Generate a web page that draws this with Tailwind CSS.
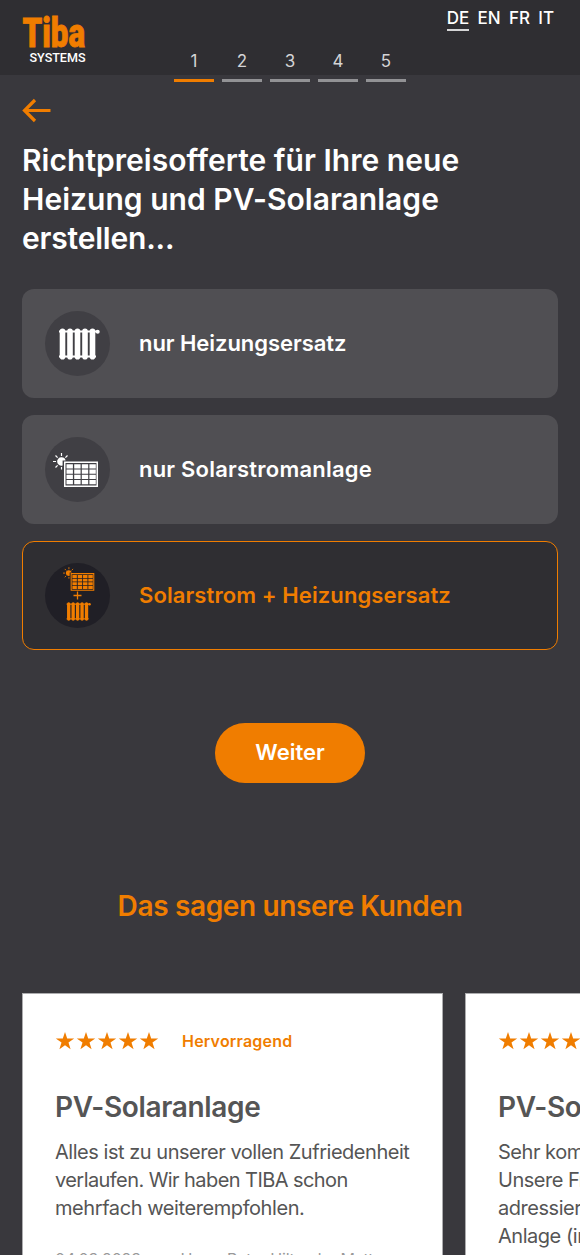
<!DOCTYPE html>
<html lang="de">
<head>
<meta charset="utf-8">
<title>Tiba Systems</title>
<script src="https://cdn.jsdelivr.net/npm/@tailwindcss/browser@4"></script>
</head>
<body class="h-[1255px] w-[580px] overflow-hidden bg-[#39383d] font-['Inter',sans-serif] text-white">
<svg class="hidden">
  <symbol id="radiator" viewBox="0 0 42 32">
    <path d="M1 3.500h38M1 28.500h37" stroke="currentColor" stroke-width="2"/>
    <path d="M4.500 3.300v25.400M12 3.300v25.400M19.500 3.300v25.400M27 3.300v25.400M34.500 3.300v25.400" stroke="currentColor" stroke-width="5.600" stroke-linecap="round"/>
    <circle cx="39.700" cy="3.700" r="2" fill="currentColor"/>
  </symbol>
  <symbol id="solar" viewBox="0 0 46 34">
    <path d="M8.500 3V0M4.600 4.600L2.500 2.500M3 8.500H0M4.600 12.400l-2.100 2.100M12.400 4.600l2.100-2.100M8.500 14v2.500" stroke="currentColor" stroke-width="1.200"/>
    <path fill="currentColor" d="M8.500 4.300a4.200 4.200 0 0 1 4.100 3.300H9.600v4.900A4.200 4.200 0 1 1 8.500 4.300z"/>
    <path fill="currentColor" fill-rule="evenodd" d="M11 8.500h34v25.500H11zM12.500 10v22.500h31V10z"/>
    <path fill="currentColor" d="M13.500 11.200h6.400v4.200h-6.400zM21.200 11.200h6.400v4.200h-6.400zM28.800 11.200h6.400v4.200h-6.400zM36.400 11.200h6.400v4.200h-6.400zM13.500 16.500h6.400v4.200h-6.400zM21.200 16.500h6.400v4.200h-6.400zM28.800 16.500h6.400v4.200h-6.400zM36.400 16.500h6.400v4.200h-6.400zM13.500 21.800h6.400v4.200h-6.400zM21.200 21.800h6.400v4.200h-6.400zM28.800 21.800h6.400v4.200h-6.400zM36.400 21.800h6.400v4.200h-6.400zM13.500 27.100h6.400v4.200h-6.400zM21.200 27.100h6.400v4.200h-6.400zM28.800 27.100h6.400v4.200h-6.400zM36.400 27.100h6.400v4.200h-6.400z"/>
  </symbol>
  <symbol id="stars" viewBox="0 0 104 20">
    <g fill="#f07d00">
      <path id="star" d="M10 1l2.200 6.500h7l-5.700 4.100 2.100 6.700-5.600-4.100-5.600 4.100 2.100-6.700L.8 7.500h7z"/>
      <use href="#star" x="21"/><use href="#star" x="42"/><use href="#star" x="63"/><use href="#star" x="84"/>
    </g>
  </symbol>
</svg>

<header class="grid h-[75px] grid-cols-[152px_232px_1fr] bg-[#2f2e32] pl-[22px] pr-[26px]">
  <svg class="mt-[10px] h-[58px] w-[68px] overflow-visible" viewBox="0 -6 68 58">
    <text x="0.500" y="30.500" textLength="62.500" lengthAdjust="spacingAndGlyphs" fill="#f07d00" stroke="#f07d00" stroke-width=".8" font-family="Roboto" font-weight="900" font-size="40">Tiba</text>
    <text x="7.500" y="45.500" textLength="56" lengthAdjust="spacingAndGlyphs" fill="#fff" font-family="Roboto" font-weight="500" font-size="13.500">SYSTEMS</text>
  </svg>
  <nav class="mt-[50px] flex h-[32px] gap-[8px] text-center text-[17px] leading-[23px] text-[#d4d4d6]">
    <div class="h-[31.500px] w-[40px] border-b-[3px] border-[#f07d00]">1</div>
    <div class="h-[31.500px] w-[40px] border-b-[3px] border-[#929295]">2</div>
    <div class="h-[31.500px] w-[40px] border-b-[3px] border-[#929295]">3</div>
    <div class="h-[31.500px] w-[40px] border-b-[3px] border-[#929295]">4</div>
    <div class="h-[31.500px] w-[40px] border-b-[3px] border-[#929295]">5</div>
  </nav>
  <nav class="mt-[6px] flex justify-end gap-[8.3px] text-[17px] leading-[24px] font-medium">
    <span class="h-[25px] border-b-[2px] border-white/80">DE</span><span>EN</span><span>FR</span><span>IT</span>
  </nav>
</header>

<main class="px-[22px]">
  <svg class="mt-[23px] h-[25px] w-[30px]" viewBox="0 0 30 25" fill="none" stroke="#f07d00" stroke-width="3.200"><path d="M28.500 12.500H2M13 2L2.500 12.500 13 23"/></svg>
  <h1 class="mt-[18px] whitespace-nowrap text-[30px] leading-[39px] font-semibold tracking-[0.03px]">Richtpreisofferte für Ihre neue<br>Heizung und PV-Solaranlage<br><span class="tracking-[-0.2px]">erstellen...</span></h1>

  <div class="mt-[31px] flex flex-col gap-[17px] text-[22px] font-semibold">
    <div class="flex h-[109px] w-[536px] items-center gap-[29px] rounded-[12px] bg-[#504f53] pl-[23px]">
      <div class="flex size-[65px] items-center justify-center rounded-full bg-[#403f44]"><svg class="ml-[2px] h-[32px] w-[42px]"><use href="#radiator"/></svg></div>
      <span class="tracking-[-0.05px]">nur Heizungsersatz</span>
    </div>
    <div class="flex h-[109px] w-[536px] items-center gap-[29px] rounded-[12px] bg-[#504f53] pl-[23px]">
      <div class="flex size-[65px] items-center justify-center rounded-full bg-[#403f44]"><svg class="mr-[4px] h-[34px] w-[46px]"><use href="#solar"/></svg></div>
      <span class="tracking-[0.22px]">nur Solarstromanlage</span>
    </div>
    <div class="flex h-[109px] w-[536px] items-center gap-[29px] rounded-[12px] border-[1.5px] border-[#f07d00] bg-[#2f2e32] pl-[22px] text-[#f07d00]">
      <div class="flex size-[65px] flex-col items-center rounded-full bg-[#201f26] pt-[4px]">
        <svg class="ml-[3px] h-[24px] w-[32px]"><use href="#solar"/></svg>
        <svg class="h-[9px] w-[9px]" viewBox="0 0 9 9"><path d="M4.500 .5v8M.5 4.500h8" stroke="currentColor" stroke-width="1.300"/></svg>
        <svg class="mt-[2px] ml-[2px] h-[19px] w-[25px]"><use href="#radiator"/></svg>
      </div>
      <span class="tracking-[0.1px]">Solarstrom + Heizungsersatz</span>
    </div>
  </div>

  <div class="mt-[73px] flex justify-center"><button class="h-[60px] w-[150px] rounded-full bg-[#f07d00] pb-[1px] text-[22px] font-semibold">Weiter</button></div>
  <h2 class="mt-[103px] text-center text-[28px] leading-[40px] font-semibold tracking-[-0.35px] text-[#f07d00]">Das sagen unsere Kunden</h2>

  <div class="mt-[67px] flex gap-[22px] whitespace-nowrap text-[#555]">
    <article class="h-[280px] w-[421px] shrink-0 border border-[#acacae] bg-white pt-[37px] pl-[32px]">
      <div class="flex h-[20px] items-center gap-[23px]"><svg class="h-[20px] w-[104px]"><use href="#stars"/></svg><span class="text-[16px] font-semibold tracking-[0.2px] text-[#f07d00]">Hervorragend</span></div>
      <h3 class="mt-[36px] text-[28px] leading-[40px] font-semibold tracking-[-0.34px]">PV-Solaranlage</h3>
      <p class="mt-[11px] text-[20px] leading-[28px] tracking-[-0.47px]">Alles ist zu unserer vollen Zufriedenheit<br><span class="tracking-[-0.57px]">verlaufen. Wir haben TIBA schon</span><br><span class="tracking-[-0.42px]">mehrfach weiterempfohlen.</span></p>
      <p class="mt-[25px] text-[16px] leading-[24px] tracking-[-0.2px] text-[#999]">04.03.2023, von Herrn Peter Hilty, der Matt</p>
    </article>
    <article class="h-[280px] w-[421px] shrink-0 border border-[#acacae] bg-white pt-[37px] pl-[32px]">
      <div class="flex h-[20px] items-center"><svg class="h-[20px] w-[104px]"><use href="#stars"/></svg></div>
      <h3 class="mt-[36px] text-[28px] leading-[40px] font-semibold tracking-[-0.34px]">PV-Solaranlage</h3>
      <p class="mt-[11px] text-[20px] leading-[28px] tracking-[-0.47px]">Sehr kompetent.<br>Unsere Fragen<br>adressiert.<br>Anlage (inkl.</p>
    </article>
  </div>
</main>
</body>
</html>
